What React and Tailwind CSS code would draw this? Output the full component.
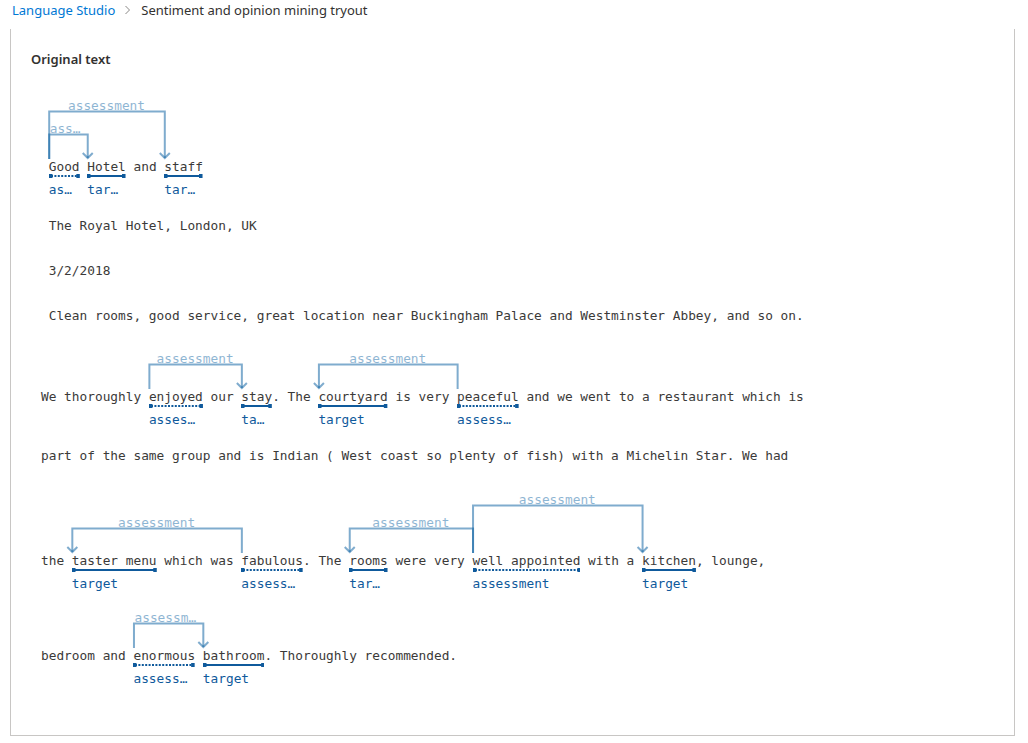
import React from 'react';

const CW = 7.706;
const MONO = { fontFamily: '"DejaVu Sans Mono", "Liberation Mono", monospace' };

const LINES = [
  {
    text: ' Good Hotel and staff',
    levels: 2,
    tags: [
      { at: 1, len: 4, kind: 'assessment' },
      { at: 6, len: 5, kind: 'target' },
      { at: 16, len: 5, kind: 'target' },
    ],
    arcs: [
      { from: 1, to: 16, level: 2 },
      { from: 1, to: 6, level: 1 },
    ],
  },
  { text: ' The Royal Hotel, London, UK' },
  { text: ' 3/2/2018' },
  { text: ' Clean rooms, good service, great location near Buckingham Palace and Westminster Abbey, and so on.' },
  {
    text: 'We thoroughly enjoyed our stay. The courtyard is very peaceful and we went to a restaurant which is',
    levels: 1,
    tags: [
      { at: 14, len: 7, kind: 'assessment' },
      { at: 26, len: 4, kind: 'target' },
      { at: 36, len: 9, kind: 'target' },
      { at: 54, len: 8, kind: 'assessment' },
    ],
    arcs: [
      { from: 14, to: 26, level: 1 },
      { from: 54, to: 36, level: 1 },
    ],
  },
  { text: 'part of the same group and is Indian ( West coast so plenty of fish) with a Michelin Star. We had' },
  {
    text: 'the taster menu which was fabulous. The rooms were very well appointed with a kitchen, lounge,',
    levels: 2,
    tags: [
      { at: 4, len: 11, kind: 'target' },
      { at: 26, len: 8, kind: 'assessment' },
      { at: 40, len: 5, kind: 'target' },
      { at: 56, len: 14, kind: 'assessment' },
      { at: 78, len: 7, kind: 'target' },
    ],
    arcs: [
      { from: 26, to: 4, level: 1 },
      { from: 56, to: 40, level: 1 },
      { from: 56, to: 78, level: 2 },
    ],
  },
  {
    text: 'bedroom and enormous bathroom. Thoroughly recommended.',
    levels: 1,
    tags: [
      { at: 12, len: 8, kind: 'assessment' },
      { at: 21, len: 8, kind: 'target' },
    ],
    arcs: [{ from: 12, to: 21, level: 1 }],
  },
];

function Underline({ len, dotted }) {
  const w = len * CW;
  return (
    <svg width={w} height="6" className="-mt-[4px] block">
      <line
        x1="2"
        y1="3"
        x2={w - 2}
        y2="3"
        stroke="#0f5a9c"
        strokeWidth="2"
        strokeDasharray={dotted ? '2 1.4' : undefined}
      />
      <rect x="0" y="1" width="3.5" height="4" fill="#0f5a9c" />
      <rect x={w - 3.5} y="1" width="3.5" height="4" fill="#0f5a9c" />
    </svg>
  );
}

function Token({ word, kind }) {
  return (
    <span className="inline-flex flex-col">
      <span className="leading-[20px]">{word}</span>
      <Underline len={word.length} dotted={kind === 'assessment'} />
      <span className="w-0 min-w-full mt-[2px] pr-[2px] leading-[18px] text-[#0f5a9c] truncate">{kind}</span>
    </span>
  );
}

function Arcs({ arcs, levels }) {
  const H = levels === 2 ? 60 : 36;
  return (
    <div className={levels === 2 ? 'relative h-[60px]' : 'relative h-[36px]'}>
      <svg className="absolute left-0 top-0 overflow-visible" width="960" height={H + 4}>
        {arcs.map((a, i) => {
          const xs = a.from * CW + 0.5;
          const xt = a.to * CW + 0.5;
          const y = H - 23 * a.level + 0.5;
          return (
            <g key={i} fill="none" stroke="rgba(0,90,158,0.5)" strokeWidth="2">
              <path d={`M${xs} ${H + 2} V${y} H${xt} V${H + 1}`} />
              <path d={`M${xt - 5} ${H - 4} L${xt} ${H + 1} L${xt + 5} ${H - 4}`} />
            </g>
          );
        })}
      </svg>
      {arcs.map((a, i) => {
        const left = Math.min(a.from, a.to) * CW;
        const width = Math.abs(a.to - a.from) * CW;
        const y = H - 23 * a.level;
        return (
          <div
            key={i}
            className="absolute px-px text-center leading-[14px] text-[#005a9e]/45 truncate"
            style={{ left, width, top: y - 12.5 }}
          >
            assessment
          </div>
        );
      })}
    </div>
  );
}

function TextLine({ line }) {
  const tags = line.tags || [];
  const parts = [];
  let pos = 0;
  tags.forEach((t, i) => {
    if (t.at > pos) parts.push(<span key={'p' + i} className="leading-[20px]">{line.text.slice(pos, t.at)}</span>);
    parts.push(<Token key={'t' + i} word={line.text.slice(t.at, t.at + t.len)} kind={t.kind} />);
    pos = t.at + t.len;
  });
  if (pos < line.text.length) parts.push(<span key="end" className="leading-[20px]">{line.text.slice(pos)}</span>);

  return (
    <div className={tags.length ? 'mb-[17px]' : 'mb-[25px]'}>
      {line.arcs && <Arcs arcs={line.arcs} levels={line.levels} />}
      <div className="flex items-start whitespace-pre">{parts}</div>
    </div>
  );
}

export default function App() {
  return (
    <div className="w-[1028px] h-[743px] bg-white overflow-hidden" style={{ fontFamily: '"Segoe UI", "Noto Sans", sans-serif' }}>
      <div className="flex items-center h-5 pl-3 text-[13px] leading-5">
        <span className="text-[#0078d4]">Language Studio</span>
        <svg width="8" height="10" viewBox="0 0 8 10" className="ml-[9px] mr-[9px]">
          <path d="M1.5 1 L5.5 5 L1.5 9" fill="none" stroke="#8a8886" strokeWidth="1" />
        </svg>
        <span className="text-[#323130]">Sentiment and opinion mining tryout</span>
      </div>

      <div className="mt-[9px] ml-[10px] w-[1005px] border-x border-b border-[#c8c6c4] pt-5 pl-5 pb-[30px]">
        <h2 className="text-[13px] leading-5 font-semibold text-[#323130]">Original text</h2>
        <div className="mt-[28px] ml-[10px] text-[12.8px] text-[#3b3a39]" style={MONO}>
          {LINES.map((line, i) => (
            <TextLine key={i} line={line} />
          ))}
        </div>
      </div>
    </div>
  );
}
